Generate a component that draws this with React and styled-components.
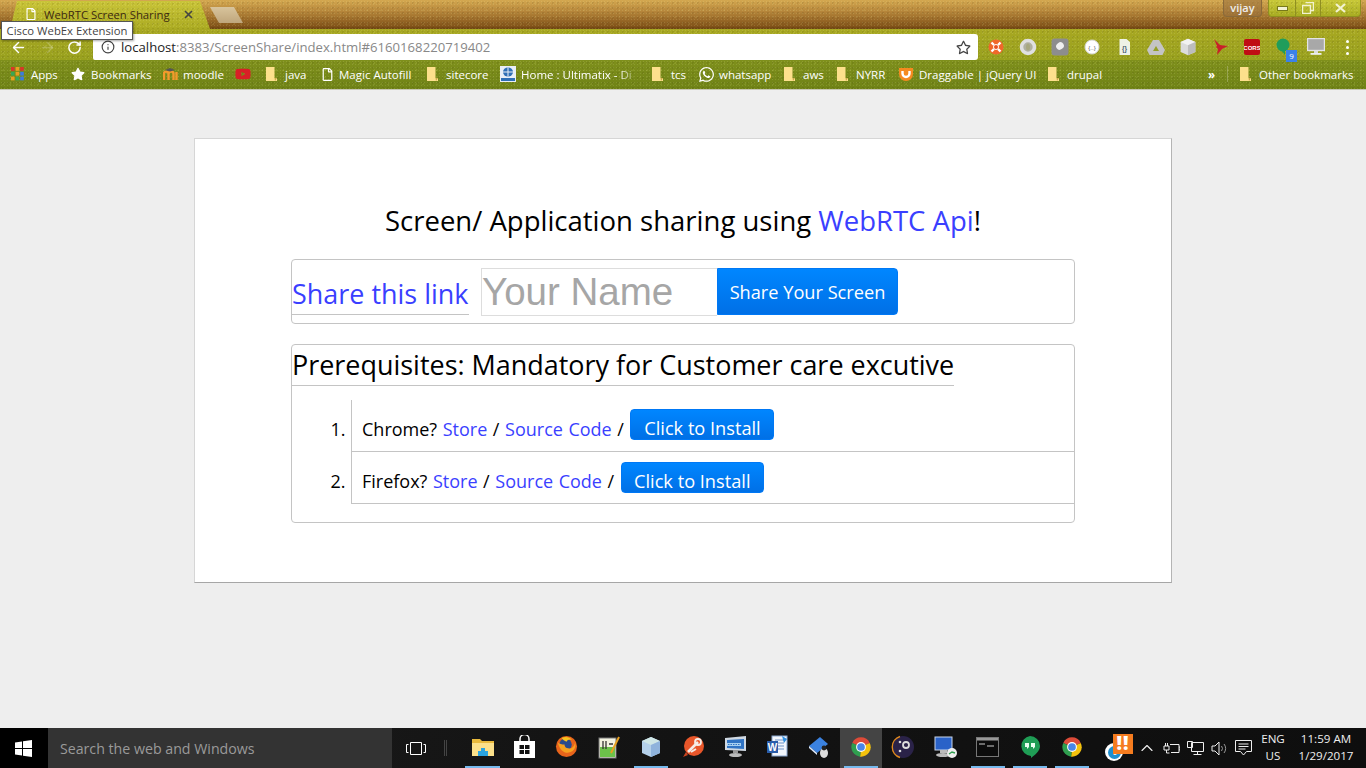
import React from "react"
import styled, { createGlobalStyle } from "styled-components"
import { FaStar, FaRegStar, FaWhatsapp, FaYoutube, FaRegFile } from "react-icons/fa"
import { ArrowLeft, ArrowRight, RotateCw, Info, ChevronUp } from "lucide-react"

const ui = `"Open Sans", "Noto Sans", sans-serif`

const Global = createGlobalStyle`
  html, body { margin: 0; padding: 0; height: 100%; overflow: hidden; background: #eeeeee; }
  * { box-sizing: border-box; }
`

const grain = `radial-gradient(rgba(255,255,190,.13) 1px, transparent 1px), radial-gradient(rgba(40,30,0,.1) 1px, transparent 1px), radial-gradient(rgba(255,255,160,.1) 1px, transparent 1px)`
const grainSize = `3px 3px, 5px 5px, 7px 7px, auto`

const Screen = styled.div`
  position: relative;
  display: flex;
  flex-direction: column;
  width: 1366px;
  height: 768px;
  font-family: ${ui};
`

const TitleBar = styled.div`
  display: flex;
  align-items: flex-start;
  height: 29px;
  padding-left: 10px;
  background-image: ${grain}, linear-gradient(#d4a850, #b5853a 40%, #83541a 90%, #6e4512);
  background-size: ${grainSize};
`

const Tab = styled.div`
  display: flex;
  align-items: center;
  width: 200px;
  height: 28px;
  margin-top: 1px;
  padding: 0 17px 2px 15px;
  clip-path: polygon(0 100%, 7px 0, 190px 0, 100% 100%);
  background-image: ${grain}, linear-gradient(#c9c438, #abab22);
  background-size: ${grainSize};
  color: #3d2a10;
  font-size: 11.3px;
`

const TabTitle = styled.span`
  flex: 1;
  margin-left: 7px;
  white-space: nowrap;
`

const NewTab = styled.div`
  width: 33px;
  height: 16px;
  margin: 7px 0 0;
  background: linear-gradient(#d8c49c, #bfa67c);
  clip-path: polygon(0 0, 24px 0, 100% 100%, 9px 100%);
`

const Frame = styled.div`
  display: flex;
  align-items: flex-start;
  margin-left: auto;
  margin-right: 5px;
`

const UserChip = styled.div`
  width: 39px;
  height: 17px;
  margin-right: 6px;
  border: 1px solid #8a6a3a;
  border-top: 0;
  border-radius: 0 0 4px 4px;
  background: rgba(150, 110, 60, .55);
  color: #eee;
  font-size: 11px;
  font-weight: 600;
  line-height: 15px;
  text-align: center;
`

const FrameButtons = styled.div`
  display: flex;
  height: 17px;
  border: 1px solid #8f8f20;
  border-top: 0;
  border-radius: 0 0 4px 4px;
  background-image: ${grain}, linear-gradient(#c8c838, #a8ac22);
  background-size: ${grainSize};
`

const FrameButton = styled.div`
  display: flex;
  align-items: center;
  justify-content: center;
  width: ${p => p.$w}px;
  border-left: ${p => (p.$first ? "0" : "1px solid #8f8f20")};
  color: #f2f2d0;
`

const Toolbar = styled.div`
  display: flex;
  align-items: center;
  height: 31px;
  padding: 5px 0 0 8px;
  background-image: ${grain}, linear-gradient(#a8a822, #98a01e);
  background-size: ${grainSize};
`

const NavButton = styled.div`
  display: flex;
  justify-content: center;
  width: ${p => p.$w}px;
  color: ${p => (p.$off ? "rgba(255,255,255,.22)" : "#fff")};
`

const Omnibox = styled.div`
  display: flex;
  align-items: center;
  width: 885px;
  height: 26px;
  margin-left: 11px;
  padding: 0 7px 0 8px;
  border-radius: 2px 3px 3px 2px;
  background: #fff;
  font-size: 13.15px;
  color: #888;
`

const Url = styled.div`
  flex: 1;
  margin-left: 6px;
  white-space: nowrap;
  b { font-weight: 400; color: #222; }
`

const Extensions = styled.div`
  display: flex;
  align-items: center;
  margin-left: 2px;
`

const Extension = styled.div`
  position: relative;
  display: flex;
  justify-content: center;
  width: 32px;
`

const Badge = styled.span`
  position: absolute;
  right: 3px;
  bottom: -6px;
  width: 11px;
  height: 12px;
  background: #3b82e8;
  color: #fff;
  font-size: 8px;
  line-height: 12px;
  text-align: center;
`

const Dots = styled.div`
  display: flex;
  flex-direction: column;
  gap: 3px;
  margin-left: 14px;
  i { width: 3px; height: 3px; border-radius: 50%; background: #fff; }
`

const Bookmarks = styled.div`
  display: flex;
  align-items: center;
  height: 30px;
  padding: 0 0 1px 11px;
  border-bottom: 1px solid #c8c8b8;
  background-image: ${grain}, linear-gradient(#7f901c, #6f8216);
  background-size: ${grainSize};
  color: #fff;
  font-size: 11.5px;
`

const Mark = styled.div`
  display: flex;
  align-items: center;
  flex: none;
  gap: ${p => p.$gap ?? 8}px;
  width: ${p => p.$w}px;
  white-space: nowrap;
  svg { flex: none; }
  ${p => p.$fade && `mask-image: linear-gradient(to right, #000 78%, transparent 92%);`}
`

const Chevrons = styled.span`
  flex: none;
  width: 19px;
  font-weight: 700;
`

const MarkDivider = styled.span`
  flex: none;
  width: 1px;
  height: 16px;
  margin-right: 12px;
  background: rgba(255,255,255,.25);
`

const Page = styled.main`
  flex: 1;
  padding-top: 48px;
  background: #eeeeee;
`

const Card = styled.section`
  width: 978px;
  height: 445px;
  margin: 0 auto;
  padding: 63px 96px 0;
  border: 1px solid #d6d6d6;
  border-right-color: #b4b4b4;
  border-bottom-color: #a6a6a6;
  background: #fff;
  color: #000;
`

const Title = styled.h1`
  margin: 0 0 19px;
  font-size: 27.5px;
  font-weight: 400;
  line-height: 38px;
  text-align: center;
`

const Link = styled.a`
  color: #3a3fff;
  text-decoration: none;
`

const Panel = styled.div`
  border: 1px solid #c4c4c4;
  border-radius: 4px;
`

const SharePanel = styled(Panel)`
  display: flex;
  align-items: flex-start;
  height: 65px;
  margin-bottom: 20px;
`

const Legend = styled.div`
  height: ${p => p.$h}px;
  padding-top: ${p => p.$top}px;
  border-bottom: 1px solid #c4c4c4;
  font-size: 26.95px;
  line-height: 38px;
  white-space: nowrap;
`

const ShareLegend = styled(Legend)`
  width: 177px;
`

const PrereqLegend = styled(Legend)`
  display: inline-block;
`

const NameInput = styled.input`
  width: 236px;
  height: 48px;
  margin: 8px 0 0 12px;
  padding: 0;
  border: 1px solid #ddd;
  border-right: 0;
  outline: 0;
  font-family: "Liberation Sans", Arial, sans-serif;
  font-size: 38.5px;
  &::placeholder { color: #a6a6a6; opacity: 1; }
`

const Button = styled.button`
  padding: 0;
  border: 1px solid #0078f5;
  background: linear-gradient(#0086ff, #0070e6);
  color: #fff;
  font-family: ${ui};
  font-size: 18.2px;
  cursor: pointer;
`

const ShareButton = styled(Button)`
  width: 181px;
  height: 47px;
  margin-top: 8px;
  border-radius: 0 4px 4px 0;
`

const InstallButton = styled(Button)`
  width: ${p => p.$w}px;
  height: 31px;
  margin-left: 1px;
  border-radius: 4px;
  word-spacing: 0;
  vertical-align: top;
  line-height: 36px;
`

const PrereqPanel = styled(Panel)`
  height: 179px;
`

const Steps = styled.ol`
  margin: 14px 0 0;
  padding: 0 0 0 59px;
`

const Step = styled.li`
  height: 52px;
  padding: 10px 0 0 10px;
  border-left: 1px solid #c4c4c4;
  border-bottom: 1px solid #c4c4c4;
  font-size: 18px;
  line-height: 38px;
  word-spacing: .9px;
  &:first-child { padding-top: 9px; line-height: 40px; }
`

const Taskbar = styled.footer`
  display: flex;
  align-items: stretch;
  height: 40px;
  background: linear-gradient(100deg, #1d1d1d, #141414 40%, #0e0e0e);
  color: #fff;
`

const Start = styled.div`
  display: flex;
  align-items: center;
  justify-content: center;
  width: 48px;
  background: #000;
`

const Search = styled.div`
  display: flex;
  align-items: center;
  width: 344px;
  padding-left: 12px;
  background: #333;
  color: #9a9a9a;
  font-size: 14.2px;
`

const TaskView = styled.div`
  display: flex;
  align-items: center;
  justify-content: center;
  width: 48px;
`

const Splitter = styled.div`
  width: 3px;
  height: 16px;
  margin: 12px 14px 0 5px;
  border-left: 1px solid #444;
  border-right: 1px solid #444;
`

const TaskIcon = styled.div`
  position: relative;
  display: flex;
  align-items: center;
  justify-content: center;
  flex: none;
  width: 42.1px;
  padding: ${p => (p.$low ? "8px 0 0" : "0 0 3px")};
  background: ${p => (p.$active ? "#444" : "transparent")};
  ${p => p.$open && `&::after {
    content: "";
    position: absolute;
    left: 4px;
    right: 4px;
    bottom: 0;
    height: 2px;
    background: #76b9ed;
  }`}
`

const Tray = styled.div`
  display: flex;
  align-items: center;
  margin-left: auto;
  padding-right: 5px;
`

const TrayIcon = styled.div`
  display: flex;
  justify-content: center;
  width: 24px;
  color: #eee;
`

const Clock = styled.div`
  width: ${p => p.$w}px;
  padding-bottom: 2px;
  color: #eee;
  font-size: 11.6px;
  line-height: 17px;
  text-align: center;
`

const Alert = styled.div`
  position: absolute;
  left: 1113px;
  bottom: 14px;
  width: 20px;
  height: 20px;
  background: #f57c1f;
  color: #fff;
  font-size: 19px;
  font-weight: 800;
  letter-spacing: 1px;
  line-height: 19px;
  text-align: center;
`

const Tooltip = styled.div`
  position: absolute;
  top: 21px;
  left: 1px;
  width: 132px;
  height: 19px;
  border: 1px solid #555;
  background: #fff;
  box-shadow: 1px 1px 2px rgba(0,0,0,.35);
  color: #444;
  font-size: 11.3px;
  line-height: 17px;
  text-align: center;
  white-space: nowrap;
`

const FolderIcon = () => (
  <svg width="11" height="14" viewBox="0 0 11 14">
    <path d="M0 0h8.500v11H11v3H0z" fill="#fde08c" />
    <path d="M8.500 11H11l-2 3z" fill="#c9a94a" />
  </svg>
)

const AppsIcon = () => (
  <svg width="13" height="14" viewBox="0 0 13 14">
    {["#d9352a", "#e8a020", "#d9352a", "#3aa655", "#e8a020", "#3a7ce0", "#e8a020", "#3aa655", "#3a7ce0"].map((c, i) => (
      <rect key={i} x={(i % 3) * 4.6} y={Math.floor(i / 3) * 4.8} width="3.6" height="3.8" fill={c} />
    ))}
  </svg>
)

const MoodleIcon = () => (
  <svg width="16" height="14" viewBox="0 0 16 14">
    <path d="M1 13V6.500C1 4 5 4 5.500 6.500V13M5.500 6.500C6 4 10.500 4 10.500 6.500V13" fill="none" stroke="#f39a2c" strokeWidth="2.400" />
    <path d="M13.500 13V5" stroke="#f39a2c" strokeWidth="2.400" />
    <path d="M2 3l5-2 5 2-5 1.500z" fill="#555" />
  </svg>
)

const TataIcon = () => (
  <svg width="16" height="16" viewBox="0 0 16 16">
    <rect width="16" height="16" fill="#e8eef6" />
    <ellipse cx="8" cy="6" rx="5" ry="4.500" fill="#2f6fb5" />
    <path d="M8 1.500v9M3 6h10" stroke="#e8eef6" />
    <rect x="1" y="12" width="14" height="3" fill="#2f6fb5" />
  </svg>
)

const ShieldIcon = () => (
  <svg width="16" height="16" viewBox="0 0 16 16">
    <path d="M1 2h14v6a7 7 0 0 1-14 0z" fill="#f58a1f" />
    <path d="M4.500 5v2.500a3.500 3.500 0 0 0 7 0V5" fill="none" stroke="#fff" strokeWidth="2.400" />
  </svg>
)

const ChromeLogo = ({ size = 22 }) => (
  <svg width={size} height={size} viewBox="0 0 24 24">
    <path d="M12 12L2.500 7.500A10.500 10.500 0 0 1 21.500 7.500z" fill="#dd4b39" />
    <path d="M12 12l9.500-4.500A10.500 10.500 0 0 1 11 22.500z" fill="#f4c20d" />
    <path d="M12 12l-1 10.500A10.500 10.500 0 0 1 2.500 7.500z" fill="#2f9e4f" />
    <circle cx="12" cy="12" r="5.400" fill="#fff" />
    <circle cx="12" cy="12" r="4.200" fill="#4a86e8" />
  </svg>
)

const Firefox = () => (
  <svg width="23" height="23" viewBox="0 0 24 24">
    <circle cx="12" cy="12" r="11" fill="#e8641b" />
    <circle cx="11" cy="10" r="6.500" fill="#2a4a8c" />
    <path d="M3 8c2 9 9 13 15 9 3-2 4-6 3-9-1 4-3 6-6 6-4 0-5-2-5-4-3 0-5-1-7-2z" fill="#f7a11f" />
    <path d="M7 3c4-2 8-1 11 2-3-1-5 0-6 2-2-1-4-2-5-4z" fill="#f7c31f" />
  </svg>
)

const Explorer = () => (
  <svg width="22" height="20" viewBox="0 0 22 20">
    <path d="M0 2h8l2 2h12v15H0z" fill="#e8b93c" />
    <path d="M0 6h22v13H0z" fill="#fbe08a" />
    <path d="M6 19v-5h3v-3h4v3h3v5z" fill="#2ba4e0" />
  </svg>
)

const StoreBag = () => (
  <svg width="21" height="23" viewBox="0 0 21 23">
    <path d="M6 6V4a4 4 0 0 1 9 0v2" fill="none" stroke="#fff" strokeWidth="1.500" />
    <path d="M0 6h21v17H0z" fill="#fff" />
    <path d="M5.500 10h4.500v4H5.500zM11 10h4.500v4H11zM5.500 15h4.500v4H5.500zM11 15h4.500v4H11z" fill="#111" />
  </svg>
)

const Notepad = () => (
  <svg width="22" height="24" viewBox="0 0 22 24">
    <rect x="1" y="3" width="17" height="20" fill="#f2f2e0" stroke="#777" />
    <rect x="2" y="12" width="15" height="10" fill="#6cc24a" />
    <path d="M5 6v8M8 6v8M11 9h4" stroke="#333" strokeWidth="1.300" />
    <path d="M13 18L21 2" stroke="#e8a020" strokeWidth="2" />
  </svg>
)

const Cube = ({ size = 22, top = "#cfe6e6", side = "#b4d0ea", dark = "#8fb3dc" }) => (
  <svg width={size} height={size} viewBox="0 0 22 22">
    <path d="M11 1l9 4v12l-9 4-9-4V5z" fill={side} />
    <path d="M11 1l9 4-9 4-9-4z" fill={top} />
    <path d="M11 9l9-4v12l-9 4z" fill={dark} />
  </svg>
)

const ToolBadge = () => (
  <svg width="23" height="23" viewBox="0 0 23 23">
    <circle cx="12" cy="11" r="10" fill="#e8562a" />
    <path d="M6 17L16 7" stroke="#f5ece6" strokeWidth="2.600" />
    <circle cx="16" cy="7" r="3" fill="none" stroke="#f5ece6" strokeWidth="1.800" />
    <path d="M9 17l5-3" stroke="#f5ece6" strokeWidth="2" />
    <path d="M1 22l3-5 2 3z" fill="#c9431f" />
  </svg>
)

const DeskMonitor = () => (
  <svg width="23" height="23" viewBox="0 0 23 23">
    <path d="M1 3l21-2v15l-21-1z" fill="#cfd8e2" />
    <path d="M3 5l17-1v10L3 13z" fill="#2f73c4" />
    <path d="M3 8h14v3H3z" fill="#a8d0f0" />
    <path d="M4 9.500h12" stroke="#2f73c4" strokeDasharray="1.500 1" />
    <path d="M9 15h5v3H9z" fill="#999" />
    <ellipse cx="11.500" cy="20" rx="6.500" ry="2" fill="#bbb" />
  </svg>
)

const GreyMonitor = () => (
  <svg width="18" height="18" viewBox="0 0 18 18">
    <rect x=".5" y=".5" width="17" height="12" fill="#a8a8a8" stroke="#e4e4e4" strokeWidth="1.400" />
    <path d="M7 13h4v2H7z" fill="#ddd" />
    <rect x="3.500" y="15" width="11" height="1.800" fill="#eee" />
  </svg>
)

const WordDoc = () => (
  <svg width="23" height="23" viewBox="0 0 23 23">
    <rect x="6" y="1" width="15" height="20" fill="#f2f6fc" stroke="#8aa7d0" />
    <path d="M9 5h9M9 8h9M11 11h7M11 14h7" stroke="#6f93c8" />
    <rect x="1" y="6" width="11" height="12" fill="#2a5caa" />
    <text x="6.500" y="15.500" fontSize="10" fontWeight="700" fill="#fff" textAnchor="middle" fontFamily="Liberation Sans">W</text>
    <path d="M16 1l5 3-3 4z" fill="#2f8fe0" />
  </svg>
)

const LinuxBook = () => (
  <svg width="24" height="24" viewBox="0 0 24 24">
    <path d="M2 11L13 2l8 7-11 9z" fill="#3b82e0" />
    <path d="M2 11l8 7v2l-8-7z" fill="#dfeafa" />
    <ellipse cx="17" cy="18" rx="4" ry="5" fill="#ddd" />
    <circle cx="17" cy="13" r="2.400" fill="#222" />
  </svg>
)

const GearOrb = () => (
  <svg width="24" height="24" viewBox="0 0 24 24">
    <circle cx="12" cy="12" r="11" fill="#2a2248" />
    <path d="M9 1.500A11 11 0 0 0 9 22.500" fill="none" stroke="#e08a1e" strokeWidth="1.400" />
    <circle cx="15" cy="10" r="3" fill="none" stroke="#ddd" strokeWidth="1.800" />
    <circle cx="9" cy="7" r="1.300" fill="#ddd" />
    <circle cx="9" cy="16" r="1.300" fill="#ddd" />
  </svg>
)

const RemoteDesktop = () => (
  <svg width="24" height="24" viewBox="0 0 24 24">
    <rect x="1" y="2" width="17" height="13" fill="#2a62c8" stroke="#c9d6ea" />
    <path d="M6 15h7v3H6z" fill="#bbb" />
    <ellipse cx="9" cy="20" rx="7" ry="2" fill="#bbb" />
    <circle cx="18" cy="18" r="5" fill="#eee" />
    <path d="M15 19l3-2 3 1" stroke="#2f9e4f" strokeWidth="1.400" fill="none" />
  </svg>
)

const Console = () => (
  <svg width="23" height="20" viewBox="0 0 23 20">
    <rect x=".5" y=".5" width="22" height="19" fill="#0c0c0c" stroke="#777" />
    <rect x="1" y="1" width="21" height="2.500" fill="#999" />
    <path d="M3 7h6M11 9h7" stroke="#ccc" />
  </svg>
)

const Hangouts = () => (
  <svg width="22" height="24" viewBox="0 0 22 24">
    <path d="M11 1a10 10 0 0 1 10 10c0 5-5 9-9 12v-2.100A10 10 0 0 1 11 1z" fill="#1f9d55" />
    <path d="M6 8h4v4l-2 2v-2H6zM12 8h4v4l-2 2v-2h-2z" fill="#eafff0" />
  </svg>
)

const Webex = () => (
  <svg width="20" height="20" viewBox="0 0 20 20">
    <circle cx="10" cy="10" r="9" fill="#fff" />
    <circle cx="10.500" cy="10.500" r="6.500" fill="#1f8fd0" />
    <circle cx="11" cy="11" r="2" fill="#fff" />
  </svg>
)

const extensions = [
  <svg width="16" height="16" viewBox="0 0 16 16" key="a"><circle cx="8" cy="8" r="7.500" fill="#f0682a" /><path d="M3.500 3.500l2.500 2.500M12.500 3.500L10 6M3.500 12.500L6 10M12.500 12.500L10 10" stroke="#fff" strokeWidth="2.400" /><circle cx="8" cy="8" r="2.500" fill="#e8501f" stroke="#fff" /></svg>,
  <svg width="18" height="18" viewBox="0 0 18 18" key="b"><circle cx="9" cy="9" r="6.500" fill="#b0b0a0" stroke="#e0e0e0" strokeWidth="3.600" /><ellipse cx="9" cy="9" rx="2" ry="3.500" fill="#a8a880" /></svg>,
  <svg width="18" height="18" viewBox="0 0 18 18" key="c"><rect x=".5" y=".5" width="17" height="17" rx="3" fill="#8d8d8d" /><ellipse cx="9" cy="8" rx="4" ry="3.500" transform="rotate(-35 9 8)" fill="#f0f0f0" /></svg>,
  <svg width="16" height="16" viewBox="0 0 16 16" key="d"><circle cx="8" cy="8" r="7" fill="#fff" stroke="#d8d8d8" /><text x="8" y="10.500" fontSize="6" textAnchor="middle" fill="#555" fontFamily="Liberation Sans">{"{..}"}</text></svg>,
  <svg width="11" height="16" viewBox="0 0 11 16" key="e"><path d="M.5 0h7L11 3v13H.5z" fill="#eef2e6" /><text x="5.500" y="11.500" fontSize="6.500" fontWeight="700" textAnchor="middle" fill="#4a5a70" fontFamily="Liberation Sans">{"{}"}</text></svg>,
  <svg width="18" height="15" viewBox="0 0 18 15" key="f"><path d="M6 0h6l6 10-2.500 5h-13L0 10z" fill="#c4c4c4" /><path d="M9 6l3 5H6z" fill="#94a028" /></svg>,
  <Cube size={18} top="#f2f2f2" side="#dcdcdc" dark="#bdbdbd" key="g" />,
  <svg width="18" height="18" viewBox="0 0 18 18" key="h"><path d="M3 1l6 6 8 1-6 3-5 6 1-6-2-2 1-1z" fill="#c8202a" /></svg>,
  <svg width="16" height="16" viewBox="0 0 16 16" key="i"><rect width="16" height="16" rx="2" fill="#c00d14" /><text x="8" y="10.500" fontSize="6" fontWeight="700" textAnchor="middle" fill="#fff" fontFamily="Liberation Sans">CORS</text></svg>,
  <svg width="18" height="18" viewBox="0 0 18 18" key="j"><circle cx="8" cy="7" r="6.500" fill="#1f9d5b" /><path d="M6 12h4v5z" fill="#1f9d5b" /></svg>,
  <GreyMonitor key="k" />,
]

const taskIcons = [
  { icon: <Explorer />, open: true },
  { icon: <StoreBag /> },
  { icon: <Firefox /> },
  { icon: <Notepad /> },
  { icon: <Cube />, open: true },
  { icon: <ToolBadge /> },
  { icon: <DeskMonitor /> },
  { icon: <WordDoc /> },
  { icon: <LinuxBook /> },
  { icon: <ChromeLogo />, open: true, active: true },
  { icon: <GearOrb /> },
  { icon: <RemoteDesktop /> },
  { icon: <Console />, open: true },
  { icon: <Hangouts />, open: true },
  { icon: <ChromeLogo />, open: true },
  { icon: <Webex />, low: true },
]

const App = () => {
  return (
    <Screen>
      <Global />
      <TitleBar>
        <Tab>
          <FaRegFile size={12} color="#fff" />
          <TabTitle>WebRTC Screen Sharing</TabTitle>
          <svg width="9" height="9" viewBox="0 0 9 9"><path d="M1 1l7 7M8 1L1 8" stroke="#444" strokeWidth="1.600" /></svg>
        </Tab>
        <NewTab />
        <Frame>
          <UserChip>vijay</UserChip>
          <FrameButtons>
            <FrameButton $w={26} $first>
              <svg width="11" height="5" viewBox="0 0 11 5"><rect x=".5" y=".5" width="10" height="4" fill="#f2f2d0" stroke="#77791a" /></svg>
            </FrameButton>
            <FrameButton $w={25}>
              <svg width="12" height="12" viewBox="0 0 12 12"><path d="M3.500.5h8v8h-3M.5 3.500h8v8h-8z" fill="none" stroke="#f2f2d0" strokeWidth="1.400" /></svg>
            </FrameButton>
            <FrameButton $w={40}>
              <svg width="11" height="10" viewBox="0 0 11 10"><path d="M1 1l9 8M10 1L1 9" stroke="#f2f2d0" strokeWidth="2.200" /></svg>
            </FrameButton>
          </FrameButtons>
        </Frame>
      </TitleBar>

      <Toolbar>
        <NavButton $w={20}><ArrowLeft size={17} strokeWidth={2} /></NavButton>
        <NavButton $w={38} $off><ArrowRight size={17} strokeWidth={2} /></NavButton>
        <NavButton $w={16}><RotateCw size={15} strokeWidth={2.400} /></NavButton>
        <Omnibox>
          <Info size={14} color="#444" />
          <Url><b>localhost</b>:8383/ScreenShare/index.html#6160168220719402</Url>
          <FaRegStar size={15} color="#444" />
        </Omnibox>
        <Extensions>
          {extensions.map((item, i) => (
            <Extension key={i}>
              {item}
              {i === 9 && <Badge>9</Badge>}
            </Extension>
          ))}
        </Extensions>
        <Dots><i /><i /><i /></Dots>
      </Toolbar>

      <Bookmarks>
        <Mark $w={60} $gap={7}><AppsIcon />Apps</Mark>
        <Mark $w={92} $gap={6}><FaStar size={14} />Bookmarks</Mark>
        <Mark $w={72} $gap={4}><MoodleIcon />moodle</Mark>
        <Mark $w={31}><FaYoutube size={16} color="#d81f26" /></Mark>
        <Mark $w={55}><FolderIcon />java</Mark>
        <Mark $w={106} $gap={5}><FaRegFile size={13} />Magic Autofill</Mark>
        <Mark $w={73}><FolderIcon />sitecore</Mark>
        <Mark $w={152} $gap={5} $fade><TataIcon />Home : Ultimatix - Di</Mark>
        <Mark $w={46}><FolderIcon />tcs</Mark>
        <Mark $w={86} $gap={4}><FaWhatsapp size={17} />whatsapp</Mark>
        <Mark $w={53}><FolderIcon />aws</Mark>
        <Mark $w={61}><FolderIcon />NYRR</Mark>
        <Mark $w={150} $gap={5}><ShieldIcon />Draggable | jQuery UI</Mark>
        <Mark $w={160}><FolderIcon />drupal</Mark>
        <Chevrons>»</Chevrons>
        <MarkDivider />
        <Mark $w={125}><FolderIcon />Other bookmarks</Mark>
      </Bookmarks>

      <Page>
        <Card>
          <Title>Screen/ Application sharing using <Link href="#">WebRTC Api</Link>!</Title>
          <SharePanel>
            <ShareLegend $h={55} $top={15}><Link href="#">Share this link</Link></ShareLegend>
            <NameInput placeholder="Your Name" />
            <ShareButton>Share Your Screen</ShareButton>
          </SharePanel>
          <PrereqPanel>
            <PrereqLegend $h={41} $top={1}>Prerequisites: Mandatory for Customer care excutive</PrereqLegend>
            <Steps>
              <Step>Chrome? <Link href="#">Store</Link> / <Link href="#">Source Code</Link> / <InstallButton $w={144}>Click to Install</InstallButton></Step>
              <Step>Firefox? <Link href="#">Store</Link> / <Link href="#">Source Code</Link> / <InstallButton $w={143}>Click to Install</InstallButton></Step>
            </Steps>
          </PrereqPanel>
        </Card>
      </Page>

      <Taskbar>
        <Start>
          <svg width="17" height="17" viewBox="0 0 17 17"><path d="M0 2.500l7-1v6.500H0zM8 1.300L17 0v8H8zM0 9h7v6.500l-7-1zM8 9h9v8l-9-1.300z" fill="#fff" /></svg>
        </Start>
        <Search>Search the web and Windows</Search>
        <TaskView>
          <svg width="20" height="13" viewBox="0 0 20 13"><path d="M4.500.5h11v12h-11zM2.500 2.500h-2v8h2M17.500 2.500h2v8h-2" fill="none" stroke="#fff" /></svg>
        </TaskView>
        <Splitter />
        {taskIcons.map((t, i) => (
          <TaskIcon key={i} $open={t.open} $active={t.active} $low={t.low}>{t.icon}</TaskIcon>
        ))}
        <Tray>
          <TrayIcon><ChevronUp size={20} strokeWidth={1.400} /></TrayIcon>
          <TrayIcon>
            <svg width="17" height="12" viewBox="0 0 17 12"><path d="M7 2.500h9v8H8M16 5h1v3h-1M1 4h5v4H1zM2.500 4V1M4.500 4V1M3.500 8v3h3" fill="none" stroke="#eee" /></svg>
          </TrayIcon>
          <TrayIcon>
            <svg width="17" height="17" viewBox="0 0 17 17"><path d="M4.500 2.500h12v9h-12zM.5 1.500h5v6h-5zM10.500 11.500v3M6.500 14.500h8" fill="#111" stroke="#eee" /></svg>
          </TrayIcon>
          <TrayIcon>
            <svg width="17" height="15" viewBox="0 0 17 15"><path d="M1 5h3l4-4v13l-4-4H1z" fill="none" stroke="#eee" /><path d="M10.500 5a4 4 0 0 1 0 5M13 3a7 7 0 0 1 0 9" fill="none" stroke="#999" /></svg>
          </TrayIcon>
          <TrayIcon>
            <svg width="17" height="16" viewBox="0 0 17 16"><path d="M.5.500h16v11h-5L8.500 15l-3-3.500h-5zM3.500 4h10M3.500 6.500h10M3.500 9h7" fill="none" stroke="#eee" /></svg>
          </TrayIcon>
          <Clock $w={36}>ENG<br />US</Clock>
          <Clock $w={70}>11:59 AM<br />1/29/2017</Clock>
        </Tray>
        <Alert>!!</Alert>
      </Taskbar>

      <Tooltip>Cisco WebEx Extension</Tooltip>
    </Screen>
  )
}

export default App
